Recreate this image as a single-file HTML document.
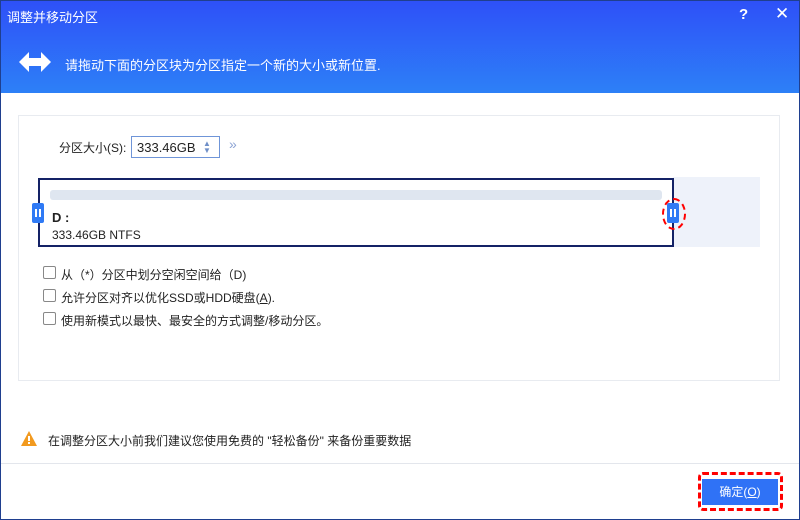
<!DOCTYPE html>
<html><head><meta charset="utf-8"><style>
*{margin:0;padding:0;box-sizing:border-box}
body{width:800px;height:520px;overflow:hidden;background:#fff;font-family:"Liberation Sans","Noto Sans CJK SC",sans-serif;font-size:12px;color:#222;position:relative}
.frame{position:absolute;left:0;top:0;width:800px;height:520px;border:1px solid #1f3f8f;}
.hdr{position:absolute;left:0;top:0;width:800px;height:93px;background:linear-gradient(#2e50f8,#2d80f7)}
.a{position:absolute}
.cb{position:absolute;width:13px;height:13px;border:1px solid #888;border-radius:2px;background:#fff}
.h{position:absolute;width:12px;height:20px;background:#2f7af5;border-radius:2px}
.h::before,.h::after{content:"";position:absolute;top:6px;width:2px;height:8px;background:#fff}
.h::before{left:3px}.h::after{left:7px}
</style></head><body>
<div class="hdr"></div>
<div class="a" style="left:7px;top:7px;color:#fff;font-size:13px">调整并移动分区</div>
<div class="a" style="left:739px;top:6px;color:#fff;font-size:15px;font-weight:bold">?</div>
<div class="a" style="left:775px;top:4px;color:#fff;font-size:17px">✕</div>
<svg class="a" style="left:19px;top:52px" width="32" height="20" viewBox="0 0 32 20"><path d="M0 10 L10 0 L10 6 L22 6 L22 0 L32 10 L22 20 L22 14 L10 14 L10 20 Z" fill="#fff"/></svg>
<div class="a" style="left:65px;top:55px;color:#fff;font-size:13px">请拖动下面的分区块为分区指定一个新的大小或新位置.</div>
<div class="a" style="left:18px;top:115px;width:762px;height:266px;border:1px solid #e8ebf0"></div>
<div class="a" style="left:59px;top:139px;font-size:12px">分区大小(S):</div>
<div class="a" style="left:131px;top:136px;width:89px;height:22px;border:1px solid #6f95d8;padding:3px 5px;font-size:13px">333.46GB</div>
<div class="a" style="left:203px;top:140px;color:#6f8fc8;font-size:8px;line-height:7px">▲<br>▼</div>
<div class="a" style="left:229px;top:136px;color:#8da4d4;font-size:14px">»</div>
<div class="a" style="left:673px;top:177px;width:87px;height:70px;background:#eef2fa"></div>
<div class="a" style="left:38px;top:178px;width:636px;height:69px;border:2px solid #142266"></div>
<div class="a" style="left:50px;top:190px;width:612px;height:10px;background:#dfe6f0;border-radius:3px"></div>
<div class="a" style="left:52px;top:210px;font-weight:bold;font-size:13px">D :</div>
<div class="a" style="left:52px;top:228px;font-size:12px">333.46GB NTFS</div>
<div class="h" style="left:32px;top:203px"></div>
<div class="h" style="left:667px;top:203px"></div>
<div class="a" style="left:662px;top:198px;width:24px;height:32px;border:2.5px dashed #f00;border-radius:50%"></div>
<div class="cb" style="left:43px;top:266px"></div><div class="a" style="left:61px;top:266px">从（*）分区中划分空闲空间给（D)</div>
<div class="cb" style="left:43px;top:289px"></div><div class="a" style="left:61px;top:289px">允许分区对齐以优化SSD或HDD硬盘(<u>A</u>).</div>
<div class="cb" style="left:43px;top:312px"></div><div class="a" style="left:61px;top:312px">使用新模式以最快、最安全的方式调整/移动分区。</div>
<svg class="a" style="left:21px;top:431px" width="16" height="15" viewBox="0 0 16 15"><path d="M8 0 L16 15 L0 15 Z" fill="#f29a1f"/><rect x="7" y="5" width="2" height="5" fill="#fff"/><rect x="7" y="11" width="2" height="2" fill="#fff"/></svg>
<div class="a" style="left:48px;top:432px">在调整分区大小前我们建议您使用免费的 "轻松备份" 来备份重要数据</div>
<div class="a" style="left:0;top:463px;width:800px;height:1px;background:#e3e6ec"></div>
<div class="a" style="left:698px;top:472px;width:85px;height:39px;border:3px dashed #f00;border-radius:5px"></div>
<div class="a" style="left:702px;top:479px;width:76px;height:26px;background:#2f72f6;color:#fff;text-align:center;line-height:26px;font-size:12px">确定(<u>O</u>)</div>
<div class="frame"></div>
</body></html>
